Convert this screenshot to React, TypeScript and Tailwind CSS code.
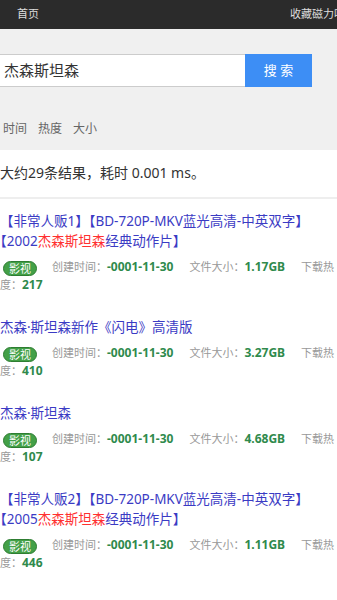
const results = [
  {
    title: ["【非常人贩1】【BD-720P-MKV蓝光高清-中英双字】", "【2002", "杰森斯坦森", "经典动作片】"],
    size: "1.17GB",
    hot: 217,
  },
  { title: ["杰森·斯坦森新作《闪电》高清版"], size: "3.27GB", hot: 410 },
  { title: ["杰森·斯坦森"], size: "4.68GB", hot: 107 },
  {
    title: ["【非常人贩2】【BD-720P-MKV蓝光高清-中英双字】", "【2005", "杰森斯坦森", "经典动作片】"],
    size: "1.11GB",
    hot: 446,
  },
];

export default function App() {
  return (
    <div className="w-[337px] h-[600px] overflow-hidden bg-white font-['Noto_Sans','Noto_Sans_CJK_SC',sans-serif] text-[#333]">
      {/* 顶部导航 */}
      <div className="flex h-[29px] items-center justify-between overflow-hidden bg-[#2b2b2b] pl-[17px] text-[11px] text-[#ddd]">
        <span>首页</span>
        <span className="-mr-2 whitespace-nowrap">收藏磁力吧</span>
      </div>

      {/* 搜索区 */}
      <div className="bg-[#f0f0f0] pt-[25px] pb-[6px]">
        <div className="flex h-[33px]">
          <div className="flex w-[245px] items-center border-y border-[#ccc] bg-white pl-[4px] text-[15px] text-[#333]">
            杰森斯坦森
          </div>
          <button className="w-[67px] bg-[#3d8ef5] text-[13px] text-white">搜 索</button>
        </div>
        <div className="mt-[27px] flex h-[30px] items-center gap-[11px] pl-[3px] text-[12px] text-[#666]">
          <span>时间</span>
          <span>热度</span>
          <span>大小</span>
        </div>
      </div>

      {/* 结果统计 */}
      <div className="border-b-2 border-[#eee] pt-[14px] pb-[15px] text-[14px] leading-[18px] text-[#333]">
        大约29条结果，耗时 0.001 ms。
      </div>

      {/* 结果列表 */}
      <div className="pt-[12px]">
        {results.map((r, i) => (
          <div key={i} className="mb-[23px]">
            <div className="text-[13.5px] leading-[20px] text-[#3b3bc4]">
              {r.title[0]}
              {r.title[1] && (
                <span className="whitespace-nowrap">
                  {r.title[1]}
                  <span className="text-[#ff3030]">{r.title[2]}</span>
                  {r.title[3]}
                </span>
              )}
            </div>
            <div className="mt-[7px] text-[11px] leading-[18px] text-[#999]">
              <span className="ml-[3px] mr-[15px] inline-block h-[15px] rounded-full border border-[#2e7d32] bg-[#43a047] px-[5px] align-middle text-[11px] leading-[13px] text-white">
                影视
              </span>
              创建时间：
              <b className="mr-[16px] text-[12px] text-[#2f8a4c]">-0001-11-30</b>
              文件大小：
              <b className="mr-[16px] text-[12px] text-[#2f8a4c]">{r.size}</b>
              下载热度：
              <b className="text-[12px] text-[#2f8a4c]">{r.hot}</b>
            </div>
          </div>
        ))}
      </div>
    </div>
  );
}
